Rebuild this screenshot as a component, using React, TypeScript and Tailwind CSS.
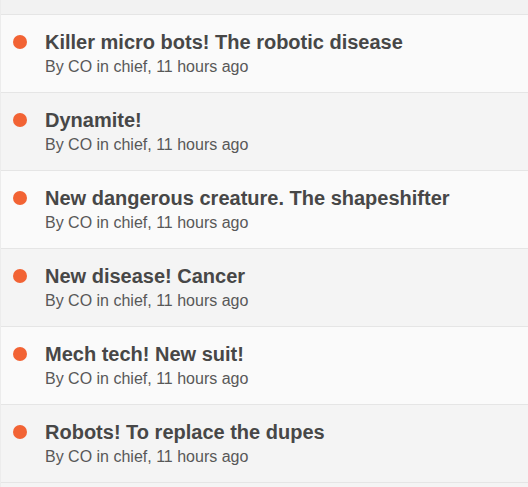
const topics = [
  "Killer micro bots! The robotic disease",
  "Dynamite!",
  "New dangerous creature. The shapeshifter",
  "New disease! Cancer",
  "Mech tech! New suit!",
  "Robots! To replace the dupes",
];

function TopicRow({ title, odd }: { title: string; odd: boolean }) {
  return (
    <div
      className={`flex h-[78px] border-b border-[#e5e5e5] ${
        odd ? "bg-[#fafafa]" : "bg-[#f4f4f4]"
      }`}
    >
      <div className="w-[44px] shrink-0 pt-[20px] pl-[12px]">
        <span className="block h-[14px] w-[14px] rounded-full bg-[#f26334]" />
      </div>
      <div className="pt-[15px]">
        <div className="text-[20px] font-bold leading-[24px] text-[#474747]">
          {title}
        </div>
        <div className="mt-[3px] text-[16px] leading-[20px] text-[#585858]">
          By CO in chief, 11 hours ago
        </div>
      </div>
    </div>
  );
}

export default function App() {
  return (
    <div
      className="h-[487px] w-[528px] overflow-hidden bg-[#f4f4f4] border-l border-[#ececec]"
      style={{ fontFamily: '"Liberation Sans", Arial, sans-serif' }}
    >
      <div className="h-[15px] border-b border-[#e5e5e5] bg-[#f2f2f2]" />
      {topics.map((t, i) => (
        <TopicRow key={t} title={t} odd={i % 2 === 0} />
      ))}
    </div>
  );
}
